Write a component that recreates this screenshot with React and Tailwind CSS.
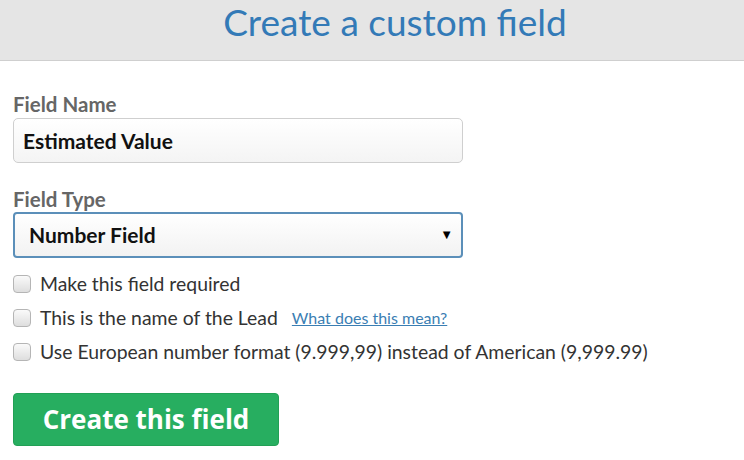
export default function App() {
  const lato = { fontFamily: 'Lato, "Open Sans", sans-serif' };
  return (
    <div className="w-[744px] h-[460px] bg-white overflow-hidden" style={lato}>
      {/* Header */}
      <div className="h-[61px] bg-[#e5e5e5] border-b border-[#cfcfcf] flex justify-center">
        <h1 className="text-[37px] leading-[44px] text-[#337ab7] font-normal pl-[46px]">
          Create a custom field
        </h1>
      </div>

      <div className="px-[13px] pt-[31px]">
        <label className="block text-[20.5px] leading-[24px] font-bold text-[#666]">Field Name</label>
        <div className="mt-[2px] w-[450px] h-[45px] rounded-[5px] border border-[#cfcfcf] bg-gradient-to-b from-white to-[#f4f4f4] flex items-center px-[9px]">
          <span className="text-[21px] font-bold text-[#111]">Estimated Value</span>
        </div>

        <label className="block mt-[24px] text-[20.5px] leading-[24px] font-bold text-[#666]">Field Type</label>
        <div className="mt-[1px] w-[450px] h-[46px] rounded-[4px] border-2 border-[#5b8fb9] bg-gradient-to-b from-white to-[#f2f2f2] flex items-center justify-between pl-[14px] pr-[8px]">
          <span className="text-[21px] font-bold text-[#111]">Number Field</span>
          <span className="text-[13px] text-black">▼</span>
        </div>

        <div className="mt-[15px] flex flex-col gap-[12px]">
          {[
            'Make this field required',
            'This is the name of the Lead',
            'Use European number format (9.999,99) instead of American (9,999.99)',
          ].map((t, i) => (
            <div key={i} className="flex items-center h-[22px]">
              <span className="w-[18px] h-[18px] rounded-[4px] border border-[#b5b5b5] bg-gradient-to-b from-[#fafafa] to-[#dedede] shrink-0" />
              <span className="ml-[9px] text-[19.4px] text-[#333]">{t}</span>
              {i === 1 && (
                <a className="ml-[14px] text-[16px] text-[#3a7eb3] underline">What does this mean?</a>
              )}
            </div>
          ))}
        </div>

        <button
          className="mt-[30px] w-[266px] h-[53px] rounded-[4px] bg-[#27ae60] border border-[#22a055] text-white text-[26px] font-bold"
          style={{ fontFamily: '"Open Sans", sans-serif' }}
        >
          Create this field
        </button>
      </div>
    </div>
  );
}
